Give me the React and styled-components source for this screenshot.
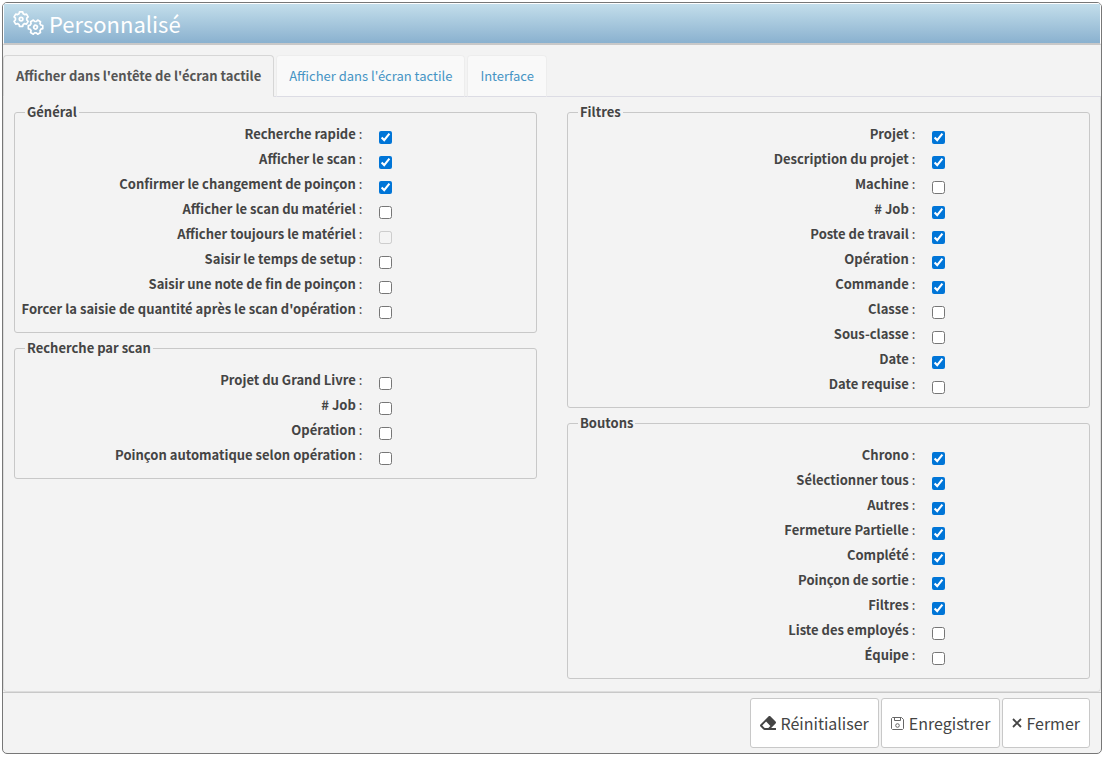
import React from "react";
import styled, { createGlobalStyle } from "styled-components";
import { FaEraser } from "react-icons/fa";

const GlobalStyle = createGlobalStyle`
  * {
    box-sizing: border-box;
  }

  body {
    margin: 0;
    background: #fff;
    color: #444;
    font-family: "Noto Sans CJK SC", "Noto Sans", sans-serif;
    font-size: 13px;
    line-height: 20px;
  }
`;

const Window = styled.main`
  display: flex;
  flex-direction: column;
  min-height: calc(100vh - 5px);
  margin: 2px 2px 3px;
  border: 1px solid #777;
  border-radius: 5px;
  background: #f3f3f3;
  overflow: hidden;
`;

const Header = styled.header`
  display: flex;
  align-items: center;
  gap: 5px;
  height: 42px;
  padding: 0 9px 2px;
  color: #fff;
  background: linear-gradient(#c3deeb, #8ab1cf);
  border: 1px solid #fff;
  border-bottom: 2px solid #c8c8c8;
`;

const Title = styled.h1`
  margin: 0;
  font-size: 22px;
  font-weight: 400;
  line-height: 36px;
`;

const Tabs = styled.nav`
  display: flex;
  gap: 2px;
  margin-top: 10px;
  border-bottom: 1px solid #dcdce4;
`;

const Tab = styled.button`
  height: 42px;
  margin-bottom: -1px;
  padding: 0 12px;
  border: 1px solid ${({ $active }) => ($active ? "#d6d6d6" : "#ededed")};
  border-bottom-color: ${({ $active }) => ($active ? "#f3f3f3" : "#dcdce4")};
  border-radius: 4px 4px 0 0;
  background: ${({ $active }) => ($active ? "#f3f3f3" : "#f9f9f9")};
  color: ${({ $active }) => ($active ? "#555" : "#4594c4")};
  font: inherit;
  font-weight: ${({ $active }) => ($active ? 700 : 400)};
  cursor: pointer;
`;

const Content = styled.section`
  flex: 1;
  display: grid;
  grid-template-columns: 1fr 1fr;
  gap: 30px;
  padding: 5px 10px 7px;
  border: 1px solid #ddd;
  border-top: none;
  border-radius: 0 0 4px 4px;
`;

const Fieldset = styled.fieldset`
  min-width: 0;
  margin: 0 0 5px;
  padding: ${({ $spaced }) => ($spaced ? "12px" : "2px")} 0 8px;
  border: 1px solid #c8c8c8;
  border-radius: 3px;
`;

const Legend = styled.legend`
  margin-left: 10px;
  padding: 0 2px;
  font-weight: 700;
  line-height: 20px;
`;

const Row = styled.div`
  display: grid;
  grid-template-columns: minmax(0, 2fr) minmax(0, 1fr);
  height: 25px;
`;

const Label = styled.label`
  text-align: right;
  white-space: nowrap;
`;

const Checkbox = styled.input`
  width: 13px;
  height: 13px;
  margin: 7px 0 0 17px;
  accent-color: #0075d7;
`;

const Footer = styled.footer`
  display: flex;
  justify-content: flex-end;
  gap: 2px;
  padding: 5px 11px;
  border-top: 1px solid #c8c8c8;
`;

const Button = styled.button`
  display: flex;
  align-items: center;
  gap: 4px;
  height: 50px;
  padding: 0 9px;
  border: 1px solid #c8c8c8;
  border-radius: 3px;
  background: #fff;
  color: #444;
  font: inherit;
  font-size: 16px;
  cursor: pointer;
`;

const gear =
  "M7.2 1h3.6l.5 2.1 1.6.9 2.1-.6 1.8 3.1-1.5 1.5v2l1.5 1.5-1.8 3.1-2.1-.6-1.6.9-.5 2.1H7.2l-.5-2.1-1.6-.9-2.1.6-1.8-3.1L2.7 10V8L1.2 6.5 3 3.4l2.1.6 1.6-.9z";

const GearsIcon = () => (
  <svg width="31" height="26" viewBox="0 0 31 26" fill="none" stroke="#fff" aria-hidden="true">
    <g transform="translate(0 1) scale(.9)" strokeWidth="1.9" strokeLinejoin="round">
      <path d={gear} />
      <circle cx="9" cy="9" r="2" />
    </g>
    <g transform="translate(14.5 9) rotate(30 8 8) scale(.9)" strokeWidth="1.9" strokeLinejoin="round">
      <path d={gear} />
      <circle cx="9" cy="9" r="2" />
    </g>
  </svg>
);

const SaveIcon = () => (
  <svg width="14" height="13" viewBox="0 0 14 13" fill="none" stroke="#666" aria-hidden="true">
    <path d="M1.5.5h9l2 2v9l-1 1h-10l-1-1v-10z M3.5.5v3h6v-3" />
    <circle cx="6.5" cy="8.5" r="1.8" />
  </svg>
);

const CloseIcon = () => (
  <svg width="10" height="10" viewBox="0 0 10 10" stroke="currentColor" strokeWidth="1.8" aria-hidden="true">
    <path d="M1 1l8 8M9 1L1 9" />
  </svg>
);

const general = [
  { label: "Recherche rapide", checked: true },
  { label: "Afficher le scan", checked: true },
  { label: "Confirmer le changement de poinçon", checked: true },
  { label: "Afficher le scan du matériel" },
  { label: "Afficher toujours le matériel", disabled: true },
  { label: "Saisir le temps de setup" },
  { label: "Saisir une note de fin de poinçon" },
  { label: "Forcer la saisie de quantité après le scan d'opération" },
];

const scan = [
  { label: "Projet du Grand Livre" },
  { label: "# Job" },
  { label: "Opération" },
  { label: "Poinçon automatique selon opération" },
];

const filters = [
  { label: "Projet", checked: true },
  { label: "Description du projet", checked: true },
  { label: "Machine" },
  { label: "# Job", checked: true },
  { label: "Poste de travail", checked: true },
  { label: "Opération", checked: true },
  { label: "Commande", checked: true },
  { label: "Classe" },
  { label: "Sous-classe" },
  { label: "Date", checked: true },
  { label: "Date requise" },
];

const buttons = [
  { label: "Chrono", checked: true },
  { label: "Sélectionner tous", checked: true },
  { label: "Autres", checked: true },
  { label: "Fermeture Partielle", checked: true },
  { label: "Complété", checked: true },
  { label: "Poinçon de sortie", checked: true },
  { label: "Filtres", checked: true },
  { label: "Liste des employés" },
  { label: "Équipe" },
];

const Group = ({ id, title, options, spaced }) => (
  <Fieldset $spaced={spaced}>
    <Legend>{title}</Legend>
    {options.map(({ label, checked, disabled }, i) => (
      <Row key={label}>
        <Label htmlFor={`${id}-${i}`}>
          <b>{label}</b> :
        </Label>
        <Checkbox type="checkbox" id={`${id}-${i}`} defaultChecked={checked} disabled={disabled} />
      </Row>
    ))}
  </Fieldset>
);

const App = () => {
  return (
    <>
      <GlobalStyle />
      <Window>
        <Header>
          <GearsIcon />
          <Title>Personnalisé</Title>
        </Header>
        <Tabs>
          <Tab $active>Afficher dans l'entête de l'écran tactile</Tab>
          <Tab>Afficher dans l'écran tactile</Tab>
          <Tab>Interface</Tab>
        </Tabs>
        <Content>
          <div>
            <Group id="general" title="Général" options={general} />
            <Group id="scan" title="Recherche par scan" options={scan} spaced />
          </div>
          <div>
            <Group id="filters" title="Filtres" options={filters} />
            <Group id="buttons" title="Boutons" options={buttons} spaced />
          </div>
        </Content>
        <Footer>
          <Button>
            <FaEraser size={16} />
            Réinitialiser
          </Button>
          <Button>
            <SaveIcon />
            Enregistrer
          </Button>
          <Button>
            <CloseIcon />
            Fermer
          </Button>
        </Footer>
      </Window>
    </>
  );
};

export default App;
